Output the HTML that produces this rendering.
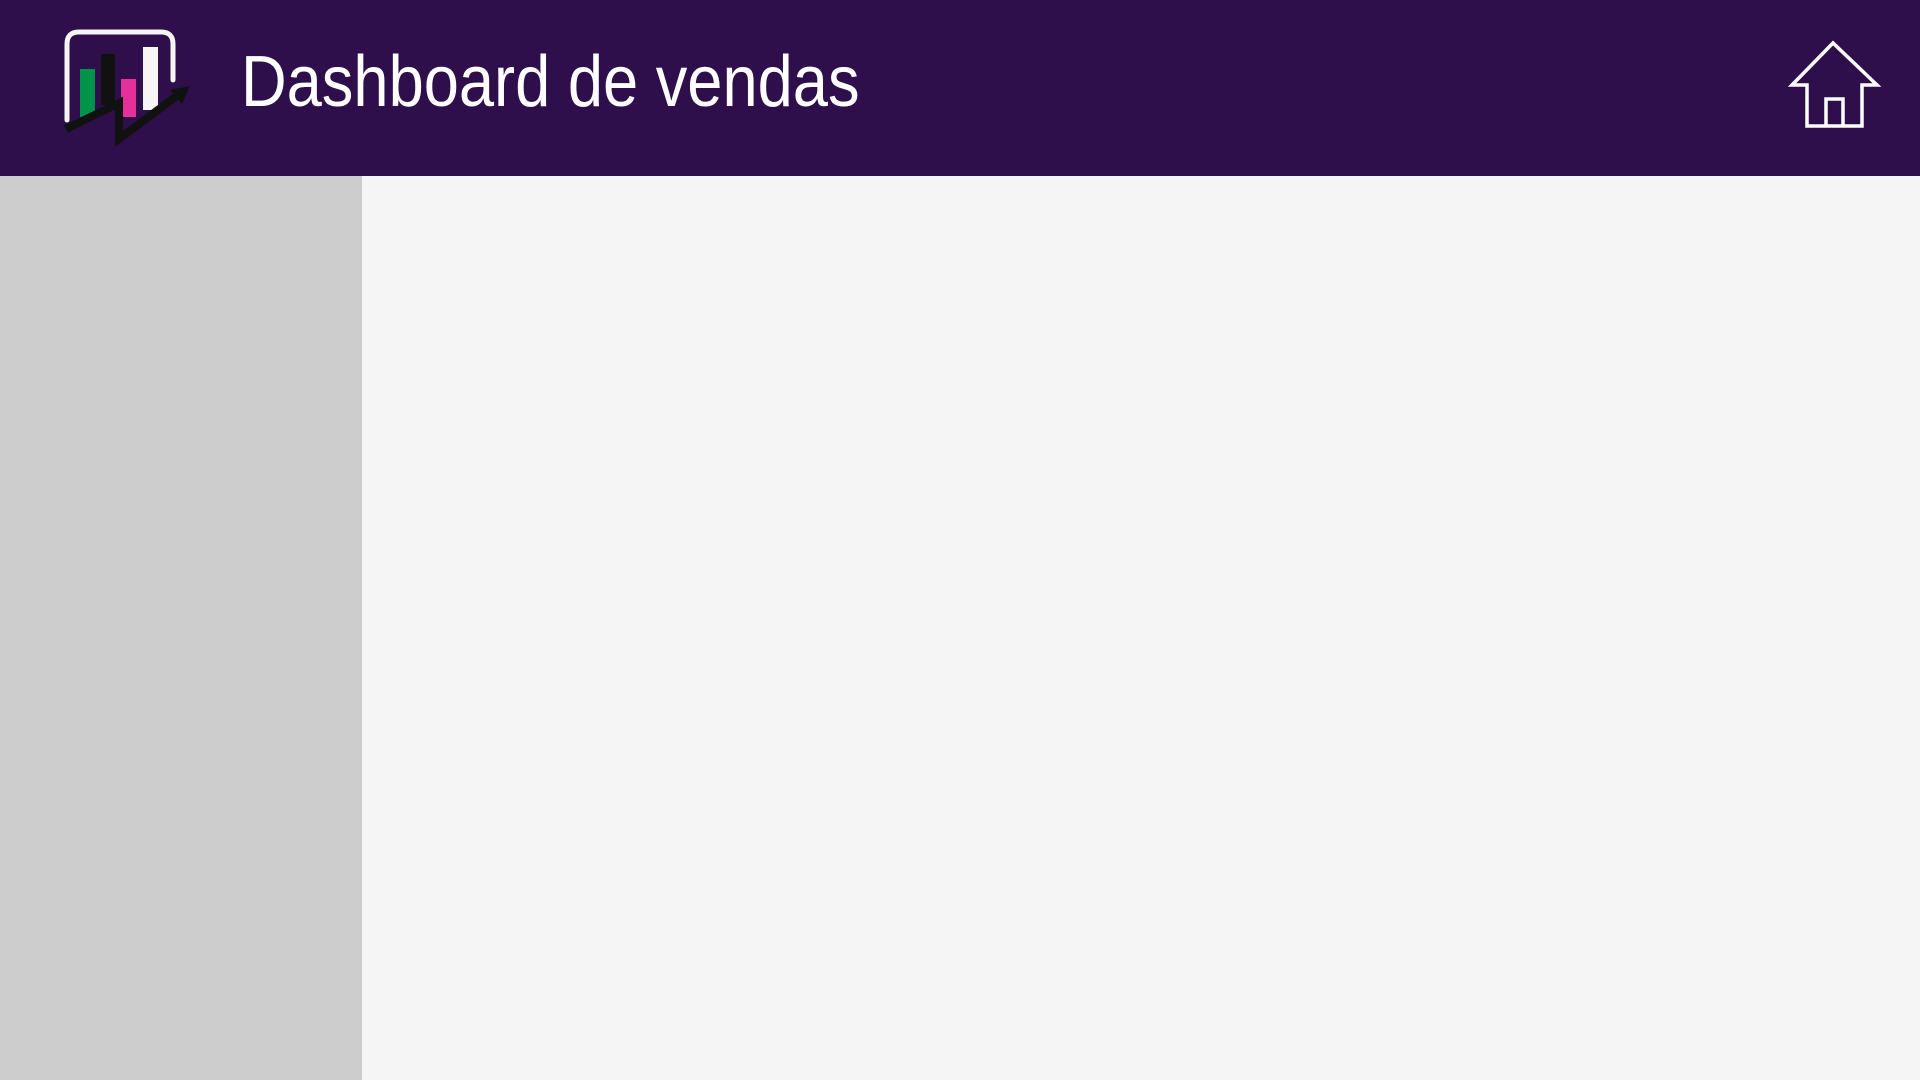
<!DOCTYPE html>
<html><head><style>
html,body{margin:0;padding:0;width:1920px;height:1080px;overflow:hidden;background:#f5f5f5;font-family:"Liberation Sans",sans-serif}
.hdr{position:absolute;left:0;top:0;width:1920px;height:176px;background:#2e0f4b}
.side{position:absolute;left:0;top:176px;width:362px;height:904px;background:#cdcdcd}
.title{position:absolute;left:241px;top:37px;font-size:72px;color:#fff;white-space:nowrap;transform:scaleX(0.878);transform-origin:left top;line-height:90px}
</style></head><body>
<div class="hdr">
<svg width="1920" height="176" style="position:absolute;left:0;top:0">
<path d="M67 120 V44 Q67 32 79 32 H161 Q173 32 173 44 V80" fill="none" stroke="#f5f5f5" stroke-width="5" stroke-linecap="round"/>
<rect x="80" y="69" width="15" height="48" fill="#00944a"/>
<rect x="101" y="54" width="14" height="51" fill="#111"/>
<rect x="121" y="79" width="15" height="38" fill="#e5309a"/>
<rect x="143" y="47" width="15" height="63" fill="#f5f5f5"/>
<polyline points="66,129 119,103 119,139 178,95" fill="none" stroke="#111" stroke-width="8" stroke-linejoin="miter"/>
<polygon points="190,86 170,90 182,104" fill="#111"/>
<path d="M1833 43 L1792 85 H1807 V126 H1862 V85 H1877 Z M1826 126 V99 H1843 V126" fill="none" stroke="#fff" stroke-width="3.5" stroke-linejoin="miter"/>
</svg>
<div class="title">Dashboard de vendas</div>
</div>
<div class="side"></div>
</body></html>
